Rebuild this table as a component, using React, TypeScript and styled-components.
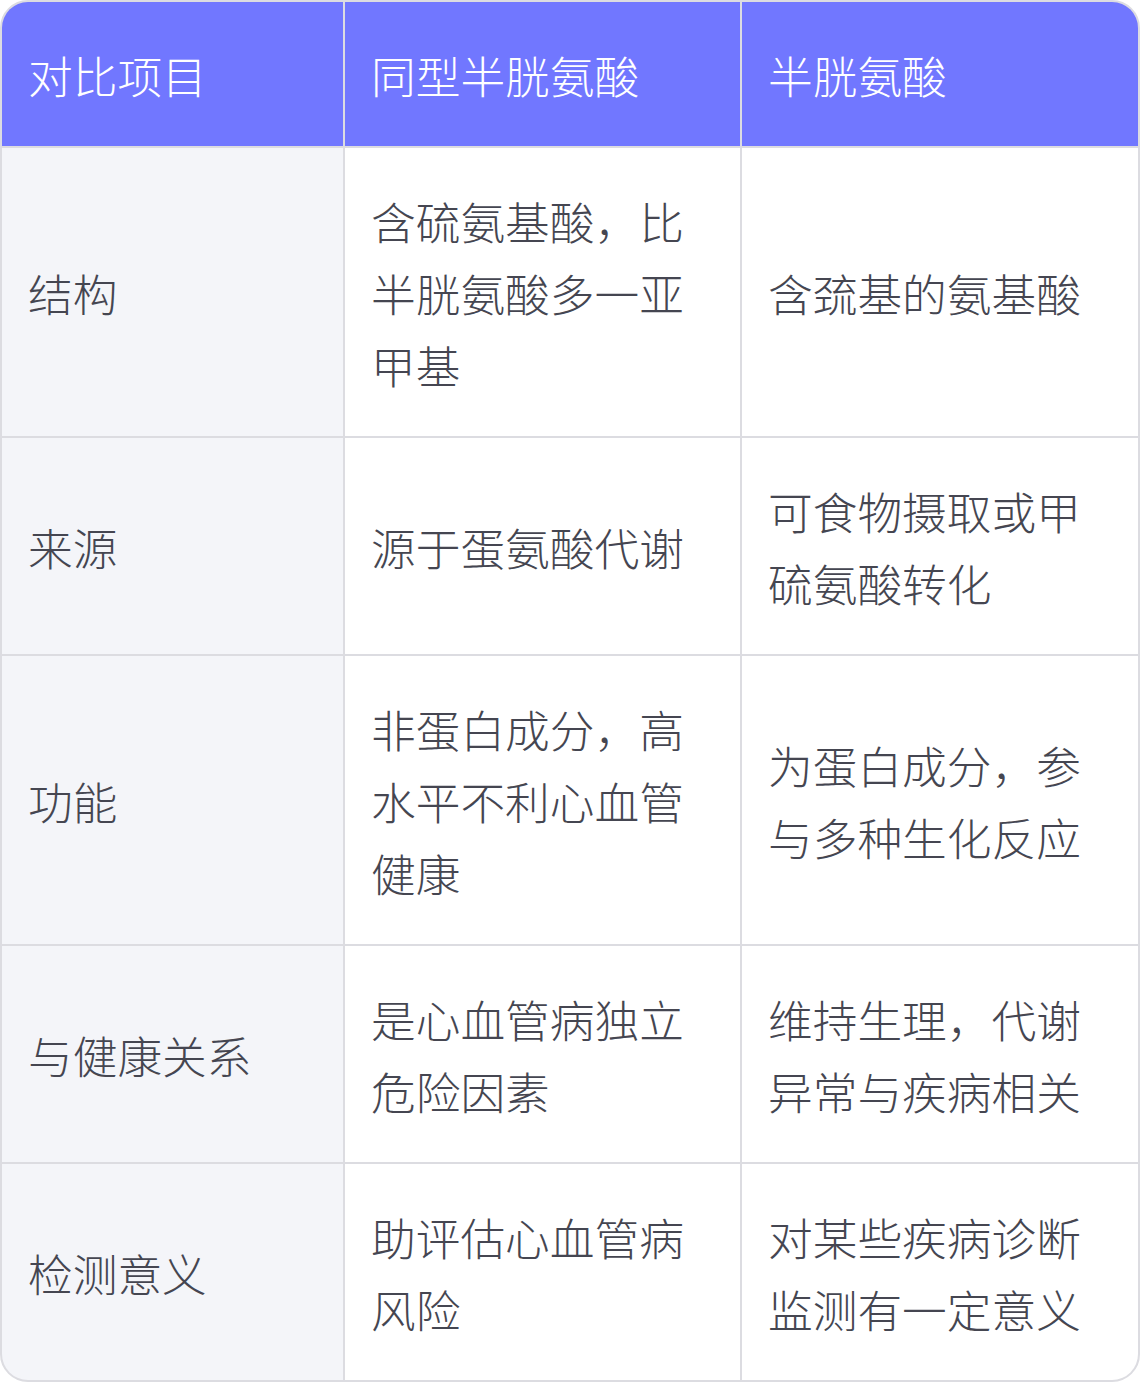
import React from "react";
import styled, { createGlobalStyle } from "styled-components";

const rows: string[][] = [
  ["结构", "含硫氨基酸，比半胱氨酸多一亚甲基", "含巯基的氨基酸"],
  ["来源", "源于蛋氨酸代谢", "可食物摄取或甲硫氨酸转化"],
  ["功能", "非蛋白成分，高水平不利心血管健康", "为蛋白成分，参与多种生化反应"],
  ["与健康关系", "是心血管病独立危险因素", "维持生理，代谢异常与疾病相关"],
  ["检测意义", "助评估心血管病风险", "对某些疾病诊断监测有一定意义"],
];

const headers = ["对比项目", "同型半胱氨酸", "半胱氨酸"];

const App: React.FC = () => {
  return (
    <>
      <Global />
      <Table>
        {headers.map((h) => (
          <HeadCell key={h}>{h}</HeadCell>
        ))}
        {rows.map((r) =>
          r.map((c, i) => (
            <Cell key={r[0] + i} first={i === 0}>
              {c}
            </Cell>
          ))
        )}
      </Table>
    </>
  );
};

const Global = createGlobalStyle`
  body {
    margin: 0;
    background: #fff;
    font-family: "Noto Sans CJK SC", "Noto Sans", sans-serif;
  }
`;

const Table = styled.div`
  box-sizing: border-box;
  width: 1140px;
  display: grid;
  grid-template-columns: 341px 395px 396px;
  gap: 2px;
  background: #dcdce1;
  border: 2px solid #dcdce1;
  border-radius: 28px;
  overflow: hidden;
`;

const HeadCell = styled.div`
  background: #7177ff;
  color: #fff;
  font-size: 44.7px;
  font-weight: 300;
  line-height: 72px;
  padding: 37px 28px 35px 26px;
  display: flex;
  align-items: center;
`;

const Cell = styled.div<{ first?: boolean }>`
  background: ${(p) => (p.first ? "#f4f5f9" : "#fff")};
  color: #454651;
  font-size: 44.7px;
  font-weight: 300;
  line-height: 72px;
  padding: 37px 28px 35px 26px;
  display: flex;
  align-items: center;
`;

export default App;
